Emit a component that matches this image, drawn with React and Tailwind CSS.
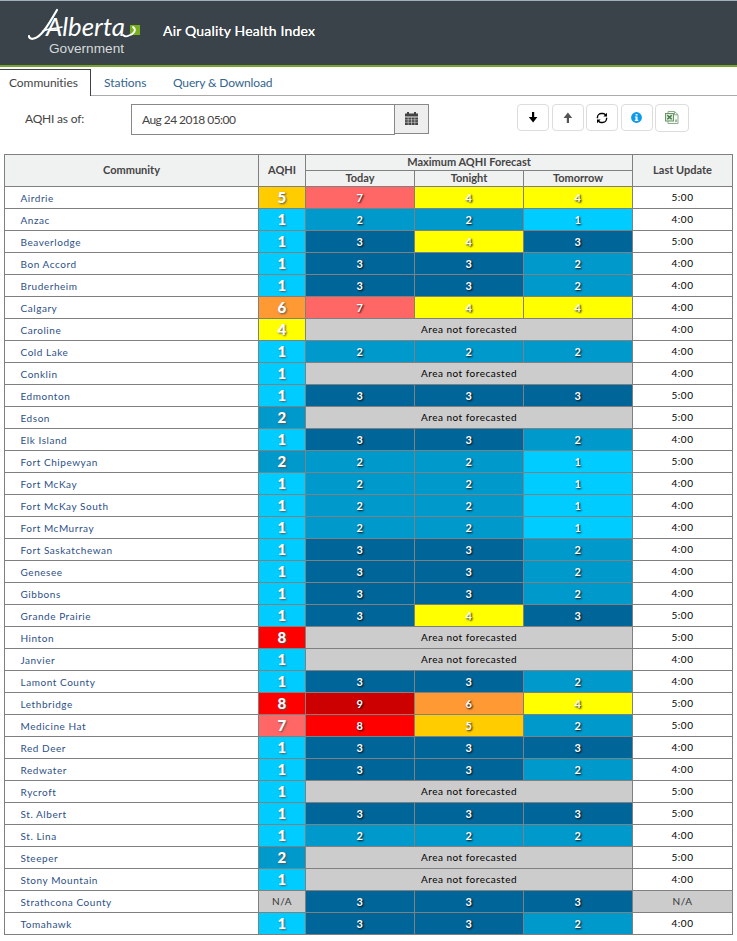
const LEVELS = {
  1: "bg-[#00ccff]",
  2: "bg-[#0099cc]",
  3: "bg-[#006699]",
  4: "bg-[#ffff00]",
  5: "bg-[#ffcc00]",
  6: "bg-[#ff9933]",
  7: "bg-[#ff6666]",
  8: "bg-[#ff0000]",
  9: "bg-[#cc0000]",
};

// name, current index, forecast (today, tonight, tomorrow), last update
const COMMUNITIES = [
  ["Airdrie", 5, [7, 4, 4], "5:00"],
  ["Anzac", 1, [2, 2, 1], "4:00"],
  ["Beaverlodge", 1, [3, 4, 3], "5:00"],
  ["Bon Accord", 1, [3, 3, 2], "4:00"],
  ["Bruderheim", 1, [3, 3, 2], "4:00"],
  ["Calgary", 6, [7, 4, 4], "4:00"],
  ["Caroline", 4, null, "4:00"],
  ["Cold Lake", 1, [2, 2, 2], "4:00"],
  ["Conklin", 1, null, "4:00"],
  ["Edmonton", 1, [3, 3, 3], "5:00"],
  ["Edson", 2, null, "5:00"],
  ["Elk Island", 1, [3, 3, 2], "4:00"],
  ["Fort Chipewyan", 2, [2, 2, 1], "5:00"],
  ["Fort McKay", 1, [2, 2, 1], "4:00"],
  ["Fort McKay South", 1, [2, 2, 1], "4:00"],
  ["Fort McMurray", 1, [2, 2, 1], "4:00"],
  ["Fort Saskatchewan", 1, [3, 3, 2], "4:00"],
  ["Genesee", 1, [3, 3, 2], "4:00"],
  ["Gibbons", 1, [3, 3, 2], "4:00"],
  ["Grande Prairie", 1, [3, 4, 3], "5:00"],
  ["Hinton", 8, null, "5:00"],
  ["Janvier", 1, null, "4:00"],
  ["Lamont County", 1, [3, 3, 2], "4:00"],
  ["Lethbridge", 8, [9, 6, 4], "5:00"],
  ["Medicine Hat", 7, [8, 5, 2], "5:00"],
  ["Red Deer", 1, [3, 3, 3], "4:00"],
  ["Redwater", 1, [3, 3, 2], "4:00"],
  ["Rycroft", 1, null, "5:00"],
  ["St. Albert", 1, [3, 3, 3], "5:00"],
  ["St. Lina", 1, [2, 2, 2], "4:00"],
  ["Steeper", 2, null, "5:00"],
  ["Stony Mountain", 1, null, "4:00"],
  ["Strathcona County", null, [3, 3, 3], null],
  ["Tomahawk", 1, [3, 3, 2], "4:00"],
];

const Logo = () => (
  <svg width="114" height="54" viewBox="0 -4 114 54" className="shrink-0 overflow-visible">
    <path d="M1 28C1 32 7 32 13 26C19 20 23 12 29 2" fill="none" stroke="#fff" strokeWidth="2.2" strokeLinecap="round" />
    <path d="M15 23C21 20 27 21 34 19" fill="none" stroke="#fff" strokeWidth="1.6" strokeLinecap="round" />
    <text x="18" y="28" textLength="79" lengthAdjust="spacingAndGlyphs" fill="#fff" fontFamily="Lato, sans-serif" fontStyle="italic" fontSize="26">
      Alberta
    </text>
    <rect x="102" y="17" width="10" height="10" fill="#78b01c" />
    <path d="M95 27C97 29 100 28 101 27.5C106 26 109 22 105 19" fill="none" stroke="#fff" strokeWidth="1.8" strokeLinecap="round" />
    <text x="21" y="45" textLength="75" lengthAdjust="spacingAndGlyphs" fill="#d6dadc" fontFamily="Liberation Sans, sans-serif" fontSize="12">
      Government
    </text>
  </svg>
);

const CalendarIcon = () => (
  <svg width="13" height="14" viewBox="0 0 13 14" fill="#444">
    <path d="M0 1.5h2V0h2v1.5h5V0h2v1.5h2v3H0z" />
    <path d="M0 5.5h13v7.5H0z" />
    <path d="M0 7.8h13M0 10.3h13M3.2 5.5v7.5M6.5 5.5v7.5M9.8 5.5v7.5" stroke="#eee" strokeWidth=".5" />
  </svg>
);

const ArrowIcon = ({ up }) => (
  <svg width="10" height="11" viewBox="0 0 10 11" className={up ? "rotate-180 text-[#555]" : "text-black"} fill="currentColor">
    <path d="M4 0h2.2v5H9.4L5.1 10.4 0.8 5H4z" />
  </svg>
);

const RefreshIcon = () => (
  <svg width="12" height="12" viewBox="0 0 12 12" fill="none" stroke="#000" strokeWidth="1.4">
    <path d="M1.4 6.2V5.4A4 4 0 0 1 5.4 1.5H7Q8.6 1.6 9.4 2.9M10.6 5.8v.8A4 4 0 0 1 6.6 10.5H5Q3.4 10.4 2.6 9.1" />
    <path d="M11 .8v3.6H7.4zM1 11.2V7.6h3.6z" fill="#000" stroke="none" />
  </svg>
);

const InfoIcon = () => (
  <svg width="11" height="11" viewBox="0 0 11 11">
    <circle cx="5.5" cy="5.5" r="5.4" fill="#0b9bea" />
    <path d="M4.6 1.9h1.9v1.5H4.6zM3.9 4.4h2.6v3.4h.8V9H3.8V7.8h.8V5.5h-.7z" fill="#fff" />
  </svg>
);

const ExcelIcon = () => (
  <svg width="14" height="13" viewBox="0 0 14 13">
    <path d="M3 .5h6.5L13 3.7v8.8H3z" fill="#f5faf4" stroke="#8fac8d" />
    <path d="M9.5 .5v3.3H13" fill="none" stroke="#8fac8d" />
    <rect x=".5" y="2.5" width="8" height="7.5" fill="#d9ead6" stroke="#6c966a" />
    <path d="M2.3 4.3l4.4 4M6.7 4.3l-4.4 4" stroke="#3c7440" strokeWidth="1.3" />
    <path d="M11 8.5v2.5" stroke="#477a48" />
  </svg>
);

const TOOLBAR = [
  { id: "down", icon: <ArrowIcon />, size: "h-[27px] w-8" },
  { id: "up", icon: <ArrowIcon up />, size: "h-[27px] w-8" },
  { id: "refresh", icon: <RefreshIcon />, size: "h-[27px] w-8" },
  { id: "info", icon: <InfoIcon />, size: "h-[27px] w-8" },
  { id: "excel", icon: <ExcelIcon />, size: "h-7 w-[34px] pb-0.5" },
];

const Header = () => (
  <header className="flex h-[67px] border-t border-b-2 border-t-[#9fb0ba] border-b-[#7aa52c] bg-[#394349] pl-7 pt-[3px]">
    <Logo />
    <h1 className="ml-[21px] mt-[17px] text-[14px] leading-5 tracking-[0.2px] text-white [text-shadow:0_0_0.5px_#fff]">
      Air Quality Health Index
    </h1>
  </header>
);

const Tabs = () => (
  <nav className="flex h-[29px] pt-0.5 text-[12px] leading-[25px]">
    <a className="w-[91px] border-r border-t border-[#394349] pl-[9px] tracking-[-0.05px] text-[#444]">Communities</a>
    <div className="flex grow border-b border-[#aaa] text-[#33658f]">
      <a className="ml-[13px] w-[69px] pt-px">Stations</a>
      <a className="pt-px tracking-[-0.15px]">Query &amp; Download</a>
    </div>
  </nav>
);

const Toolbar = () => (
  <div className="flex h-[58px] pt-2">
    <label className="w-[131px] pl-[25px] pt-[7px] text-[12px] leading-4 tracking-[-0.2px] text-[#444]">AQHI as of:</label>
    <div className="h-[31px] w-[264px] border border-[#888] pl-[10px] text-[12px] leading-[30px] tracking-[-0.55px] text-[#444]">
      Aug 24 2018 05:00
    </div>
    <button className="flex h-[30px] w-[34px] items-center justify-center border border-l-0 border-[#888] bg-[#eee]">
      <CalendarIcon />
    </button>
    <div className="ml-[88px] flex gap-[2.5px]">
      {TOOLBAR.map(({ id, icon, size }) => (
        <button key={id} className={`${size} flex items-center justify-center rounded-[4px] border border-[#ddd] bg-white`}>
          {icon}
        </button>
      ))}
    </div>
  </div>
);

const Forecast = ({ values }) => {
  if (!values) {
    return (
      <td colSpan={3} className="border border-[#808080] bg-[#cccccc] p-0 pb-0.5 text-center text-black">
        Area not forecasted
      </td>
    );
  }
  return values.map((value, i) => (
    <td
      key={i}
      className={`${LEVELS[value]} border border-[#808080] p-0 text-center text-[11px] font-bold text-white [text-shadow:1px_1px_2px_#000]`}
    >
      {value}
    </td>
  ));
};

const CommunityRow = ({ name, index, forecast, updated }) => (
  <tr className="h-[22px]">
    <td className="border border-[#808080] p-0 pl-[15.5px] tracking-[0.55px] text-[#2d4f85]">{name}</td>
    {index ? (
      <td className={`${LEVELS[index]} border border-[#808080] p-0 pb-px text-center text-[15px] font-black text-white [text-shadow:1px_1px_2px_#555]`}>
        {index}
      </td>
    ) : (
      <td className="border border-[#808080] bg-[#cccccc] p-0 pb-0.5 text-center text-[#333]">N/A</td>
    )}
    <Forecast values={forecast} />
    <td className={`border border-[#808080] p-0 pb-0.5 text-center ${updated ? "text-black" : "bg-[#cccccc] text-[#333]"}`}>
      {updated || "N/A"}
    </td>
  </tr>
);

const CommunityTable = () => (
  <table className="ml-1 w-[729px] table-fixed border-collapse text-[10px] leading-[18px] tracking-[0.5px]">
    <colgroup>
      <col className="w-[254px]" />
      <col className="w-[47px]" />
      <col className="w-[109px]" />
      <col className="w-[109px]" />
      <col className="w-[109px]" />
      <col className="w-[100px]" />
    </colgroup>
    <thead className="bg-[#f0f1f1] text-[11px] leading-[13px] tracking-normal text-[#444]">
      <tr className="h-4">
        <th rowSpan={2} className="border border-[#808080] p-0 pb-0.5">Community</th>
        <th rowSpan={2} className="border border-[#808080] p-0 pb-0.5">AQHI</th>
        <th colSpan={3} className="border border-[#808080] p-0 pb-0.5">Maximum AQHI Forecast</th>
        <th rowSpan={2} className="border border-[#808080] p-0 pb-0.5">Last Update</th>
      </tr>
      <tr className="h-4">
        <th className="border border-[#808080] p-0 pb-0.5">Today</th>
        <th className="border border-[#808080] p-0 pb-0.5">Tonight</th>
        <th className="border border-[#808080] p-0 pb-0.5">Tomorrow</th>
      </tr>
    </thead>
    <tbody>
      {COMMUNITIES.map(([name, index, forecast, updated]) => (
        <CommunityRow key={name} name={name} index={index} forecast={forecast} updated={updated} />
      ))}
    </tbody>
  </table>
);

const App = () => {
  return (
    <div className="h-[941px] w-[737px] overflow-hidden bg-white font-[Lato,sans-serif]">
      <Header />
      <Tabs />
      <Toolbar />
      <CommunityTable />
    </div>
  );
};

export default App;
